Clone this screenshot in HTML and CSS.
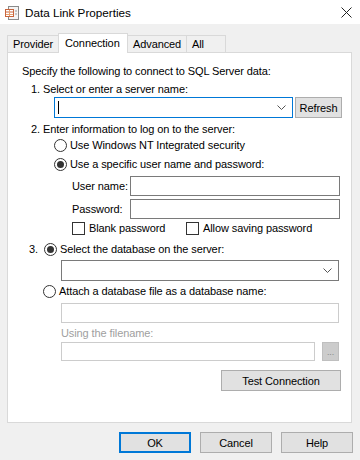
FILE: index.html
```html
<!DOCTYPE html>
<html lang="en">
<head>
    <meta charset="UTF-8">
    <meta name="viewport" content="width=device-width, initial-scale=1.0">
    <title>Data Link Properties</title>
    <link rel="stylesheet" href="styles.css">
</head>
<body>

<div class="window">
    <div class="titlebar">
        <svg class="app-icon" width="14" height="14" viewBox="0 0 14 14">
            <rect x="3.5" y="0.5" width="10" height="13" fill="#f4f4f4" stroke="#8a8a8a"/>
            <rect x="0.5" y="3.5" width="8" height="7" fill="#fff" stroke="#c8643c"/>
            <line x1="1" y1="6" x2="8" y2="6" stroke="#c8643c"/>
            <line x1="1" y1="8.5" x2="8" y2="8.5" stroke="#e8a070"/>
            <line x1="4.5" y1="4" x2="4.5" y2="10" stroke="#e8a070"/>
            <line x1="10" y1="5" x2="12" y2="5" stroke="#9a9a9a"/>
            <line x1="10" y1="8" x2="12" y2="8" stroke="#9a9a9a"/>
        </svg>
        <span class="title">Data Link Properties</span>
        <svg class="close" width="11" height="11" viewBox="0 0 11 11">
            <path d="M0.5 0.5 L10.5 10.5 M10.5 0.5 L0.5 10.5" stroke="#222" stroke-width="1"/>
        </svg>
    </div>

    <div class="tabs">
        <div class="tab t-provider">Provider</div>
        <div class="tab active">Connection</div>
        <div class="tab t-advanced">Advanced</div>
        <div class="tab t-all">All</div>
    </div>

    <div class="panel">
        <div class="line intro">Specify the following to connect to SQL Server data:</div>
        <div class="line step1">1. Select or enter a server name:</div>
        <div class="row server-row">
            <div class="combo focused">
                <span class="caret"></span>
                <svg class="chev" width="9" height="5" viewBox="0 0 9 5"><path d="M0.5 0.5 L4.5 4.5 L8.5 0.5" fill="none" stroke="#555"/></svg>
            </div>
            <button class="btn refresh">Refresh</button>
        </div>

        <div class="line step2">2. Enter information to log on to the server:</div>
        <div class="line radio-line r1"><span class="radio"></span>Use Windows NT Integrated security</div>
        <div class="line radio-line r2"><span class="radio checked"></span>Use a specific user name and password:</div>
        <div class="row field-row user-row">
            <label>User name:</label>
            <div class="textbox"></div>
        </div>
        <div class="row field-row pass-row">
            <label>Password:</label>
            <div class="textbox"></div>
        </div>
        <div class="row checks">
            <span class="check-item"><span class="checkbox"></span>Blank password</span>
            <span class="check-item second"><span class="checkbox"></span>Allow saving password</span>
        </div>

        <div class="line step3"><span class="num">3.</span><span class="radio checked"></span>Select the database on the server:</div>
        <div class="row db-row">
            <div class="combo wide">
                <svg class="chev" width="9" height="5" viewBox="0 0 9 5"><path d="M0.5 0.5 L4.5 4.5 L8.5 0.5" fill="none" stroke="#555"/></svg>
            </div>
        </div>
        <div class="line attach"><span class="radio"></span>Attach a database file as a database name:</div>
        <div class="row attach-box">
            <div class="textbox disabled wide"></div>
        </div>
        <div class="line using">Using the filename:</div>
        <div class="row file-row">
            <div class="textbox disabled file"></div>
            <button class="btn browse">...</button>
        </div>
        <div class="row test-row">
            <button class="btn test">Test Connection</button>
        </div>
    </div>

    <div class="footer">
        <button class="btn dlg ok">OK</button>
        <button class="btn dlg">Cancel</button>
        <button class="btn dlg">Help</button>
    </div>
</div>

</body>
</html>
```

FILE: styles.css
```css
body {
    margin: 0;
    padding: 0;
    background-color: #f0f0f0;
    font-family: "Liberation Sans", Arial, sans-serif;
    font-size: 11px;
    letter-spacing: -0.1px;
    color: #000;
}
.window {
    width: 360px;
    height: 460px;
    overflow: hidden;
}
.titlebar {
    height: 24px;
    background-color: #fff;
    display: flex;
    align-items: center;
    padding-left: 5px;
    padding-right: 8px;
}
.app-icon {
    margin-right: 6px;
    margin-top: 1px;
}
.title {
    font-size: 11.7px;
    letter-spacing: 0;
    flex: 1;
}
.tabs {
    display: flex;
    align-items: flex-end;
    margin-top: 8px;
    padding-left: 7px;
    height: 20px;
}
.tab {
    height: 16px;
    line-height: 17px;
    padding-left: 5px;
    border: 1px solid #d9d9d9;
    border-bottom: none;
    background-color: #f0f0f0;
    margin-left: -1px;
    box-sizing: content-box;
    white-space: nowrap;
}
.t-provider {
    width: 45px;
    margin-left: 0;
}
.t-advanced {
    width: 53px;
}
.t-all {
    width: 33px;
}
.tab.active {
    width: 62px;
    height: 19px;
    line-height: 18px;
    background-color: #fff;
    position: relative;
    z-index: 1;
    margin-bottom: -1px;
    padding-left: 6px;
}
.panel {
    margin: 0 8px 0 7px;
    height: 369px;
    background-color: #fff;
    border: 1px solid #d9d9d9;
}
.line {
    height: 16px;
    line-height: 16px;
    display: flex;
    align-items: center;
    white-space: nowrap;
}
.row {
    display: flex;
    align-items: center;
    white-space: nowrap;
}
.intro {
    margin-top: 10px;
    padding-left: 14px;
}
.step1 {
    margin-top: 2px;
    padding-left: 23px;
}
.server-row {
    height: 21px;
    padding-left: 46px;
}
.combo {
    height: 19px;
    border: 1px solid #7a7a7a;
    background-color: #fff;
    display: flex;
    align-items: center;
    justify-content: space-between;
    padding: 0 6px 0 3px;
    box-sizing: content-box;
}
.combo.focused {
    width: 228px;
    border-color: #0078d7;
}
.combo.wide {
    width: 267px;
    justify-content: flex-end;
}
.caret {
    width: 1px;
    height: 13px;
    background-color: #000;
}
.btn {
    font-family: "Liberation Sans", Arial, sans-serif;
    font-size: 11px;
    letter-spacing: -0.1px;
    background-color: #e1e1e1;
    border: 1px solid #adadad;
    padding: 0;
    color: #000;
}
.refresh {
    width: 47px;
    height: 21px;
    margin-left: 2px;
}
.step2 {
    margin-top: 3px;
    padding-left: 23px;
}
.radio {
    width: 11px;
    height: 11px;
    border: 1px solid #333;
    border-radius: 50%;
    background-color: #fff;
    margin-right: 3px;
    display: flex;
    align-items: center;
    justify-content: center;
    flex: none;
}
.radio.checked::after {
    content: "";
    width: 7px;
    height: 7px;
    border-radius: 50%;
    background-color: #333;
}
.radio-line {
    padding-left: 46px;
}
.r2 {
    margin-top: 3px;
}
.field-row {
    height: 20px;
    padding-left: 64px;
}
.user-row {
    margin-top: 4px;
}
.pass-row {
    margin-top: 3px;
}
.field-row label {
    width: 58px;
    flex: none;
}
.textbox {
    width: 208px;
    height: 18px;
    border: 1px solid #7a7a7a;
    background-color: #fff;
}
.textbox.disabled {
    border-color: #cccccc;
}
.textbox.wide {
    width: 276px;
}
.textbox.file {
    width: 252px;
    height: 17px;
}
.checks {
    height: 16px;
    margin-top: 1px;
    padding-left: 64px;
}
.check-item {
    display: flex;
    align-items: center;
    width: 114px;
    flex: none;
}
.checkbox {
    width: 11px;
    height: 11px;
    border: 1px solid #333;
    margin-right: 4px;
    background-color: #fff;
    flex: none;
}
.step3 {
    margin-top: 5px;
    padding-left: 21px;
}
.step3 .num {
    width: 15px;
}
.db-row {
    margin-top: 3px;
    padding-left: 53px;
}
.attach {
    margin-top: 2px;
    padding-left: 35px;
}
.attach-box {
    margin-top: 4px;
    padding-left: 53px;
}
.using {
    margin-top: 2px;
    padding-left: 53px;
    color: #a0a0a0;
}
.file-row {
    margin-top: 1px;
    padding-left: 53px;
}
.browse {
    width: 17px;
    height: 19px;
    margin-left: 7px;
    background-color: #cccccc;
    border-color: #bfbfbf;
    color: #8a8a8a;
    font-size: 9px;
    line-height: 10px;
}
.test-row {
    margin-top: 9px;
    padding-left: 213px;
}
.test {
    width: 120px;
    height: 21px;
}
.footer {
    display: flex;
    margin-top: 9px;
    padding-left: 119px;
    gap: 9px;
}
.dlg {
    width: 72px;
    height: 21px;
}
.ok {
    border: 2px solid #0078d7;
}
```
